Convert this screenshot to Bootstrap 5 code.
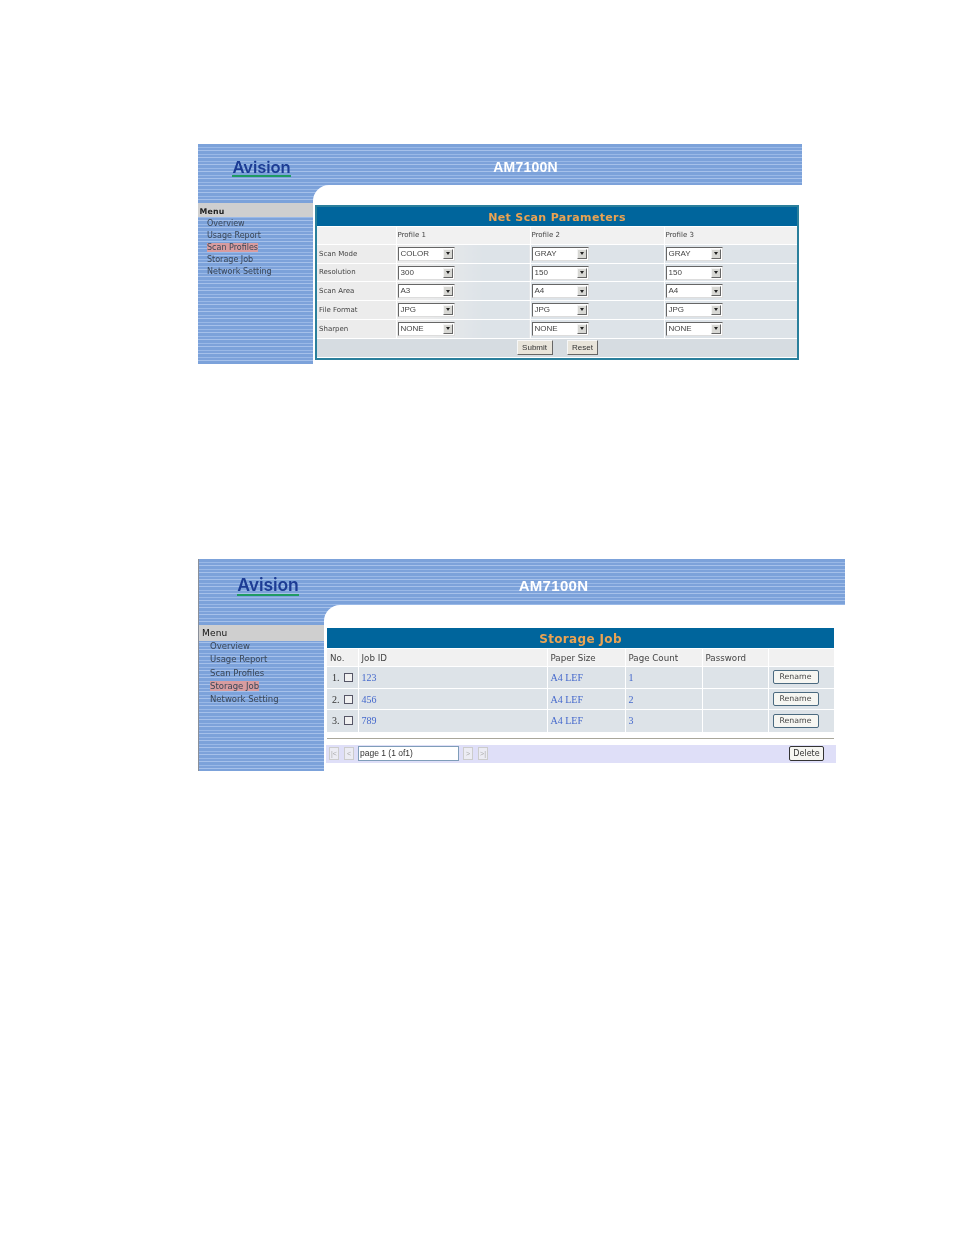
<!DOCTYPE html>
<html lang="en">
<head>
<meta charset="utf-8">
<title>Avision AM7100N</title>
<link href="https://cdn.jsdelivr.net/npm/bootstrap@5.3.0/dist/css/bootstrap.min.css" rel="stylesheet">
<style>
html,body{background:#fff;margin:0}
.sheet{width:954px;height:1235px;padding:144px 0 0 198px;overflow:hidden;font-family:"DejaVu Sans",sans-serif;color:#333}
.shot{display:grid;filter:blur(.35px);background-color:#82a6dc;background-image:repeating-linear-gradient(180deg,#7ca2da 0 3px,#9ab9e7 3px 4px,#7da2da 4px 6px,#a6c1ea 6px 7px)}
.shot-a{width:604px;height:220px;grid-template-columns:115px 1fr;grid-template-rows:41px 1fr}
.shot-b{width:647px;height:212px;margin-top:195px;grid-template-columns:125px 1fr;grid-template-rows:46px 1fr;border-left:1px solid #8a8f99}
.top{grid-column:1/3;display:flex;align-items:center;padding-top:6px}
.shot-b .top{padding-top:8px}
.logo-box{display:flex;justify-content:center}
.shot-a .logo-box{width:127px}
.shot-b .logo-box{width:138px}
.logo{font-family:Inter,"DejaVu Sans",sans-serif;font-weight:600;color:#1c3c94;font-size:16.6px;line-height:16px;border-bottom:2px solid #1f9a63;letter-spacing:-.1px}
.shot-b .logo{font-size:17.6px;line-height:18px}
.model{flex:1;text-align:center;font-family:"Liberation Sans",sans-serif;font-weight:700;font-size:14px;color:#fff;letter-spacing:.2px}
.shot-a .model{padding-right:76px}
.shot-b .model{padding-right:76px;font-size:15px;letter-spacing:.3px}
.side{padding-top:18px;font-size:8px;line-height:12px;color:#3a4656}
.shot-b .side{padding-top:20px;font-size:8.5px;line-height:13.3px}
.side-head{background:#cfcfcf;font-weight:700;font-size:7.8px;height:14px;line-height:17px;padding-left:1.5px;color:#222;letter-spacing:.2px;margin-bottom:1px}
.shot-b .side-head{height:16px;line-height:17px;font-size:9px;font-weight:400;color:#111;padding-left:3px;margin-bottom:-1px}
.side-item{padding-left:9px}
.shot-b .side-item{padding-left:11px}
.hot{background:#d89c9f}
.pane{background:#fff;border-top-left-radius:16px;padding:20px 3px 0 2px}
.shot-b .pane{padding:23px 10px 0 3px}
.box{border:2px solid #2a7f9c;height:155px;width:484px}
.bar{background:#00659c;color:#eba352;font-weight:700;text-align:center;letter-spacing:.35px}
.shot-a .bar{height:19px;line-height:21px;font-size:11px}
.shot-b .bar{height:20px;line-height:22px;font-size:12px;width:507px}
table.grid{border-collapse:collapse;table-layout:fixed;margin:0;font-size:7px;color:#444}
table.grid td{padding:0 0 0 2px;vertical-align:middle;border-left:1px solid #fff;border-top:1px solid #fff;background:#dde3e8}
table.grid td:first-child{border-left:0}
table.grid tr.head td{background:#f1f1f1}
.grid-a{width:480px}
.grid-a tr{height:18.7px}
.grid-a tr.head{height:18px}
table.grid-a td.lbl{background:#ececec}
table.grid-a td.p1{background:linear-gradient(90deg,#ebebeb 20%,#dde3e8 65%)}
table.grid-a td.slot{padding-left:1px}
.picker{display:flex;width:57px;height:14px;background:#fff;border:1px solid;border-color:#666 #ddd #ddd #666;font-family:"Liberation Sans",sans-serif;font-size:8px;line-height:12px;padding-left:2px;justify-content:space-between;color:#444}
.arrow{width:10px;height:10px;margin:1px;background:#d8d8d4;border:1px solid;border-color:#f4f4f4 #666 #666 #f4f4f4;display:flex;align-items:center;justify-content:center}
.arrow::after{content:"";border:2.5px solid transparent;border-top:3px solid #222;border-bottom:0}
.foot{height:19px;background:#d6dce1;display:flex;justify-content:center;align-items:center;gap:14px;padding-left:1px;border-top:1px solid #fff;width:480px}
.press{font-family:"Liberation Sans",sans-serif;font-size:8px;background:#e8e4da;color:#333;border:1px solid;border-color:#f7f7f7 #666 #666 #f7f7f7;height:15px;line-height:13px;padding:0 4.5px}
.grid-b{width:507px}
.grid-b tr{height:21.7px}
.grid-b tr.head{height:18px}
table.grid-b td{font-size:8.7px;padding-left:3px}
table.grid-b tr.head td{padding-top:2px}
.num{font-family:"Liberation Serif",serif;font-size:10px;color:#333;display:flex;justify-content:flex-end;align-items:center;gap:4px;padding-right:5px}
.tick{width:9px;height:9px;border:1px solid #556;background:#f1f1f1;display:inline-block}
table.grid-b td.linkish{font-family:"Liberation Serif",serif;font-size:10px;color:#4468cc}
.rename{font-family:"DejaVu Sans",sans-serif;font-size:7.8px;width:46px;height:14px;line-height:12px;background:#f6f6f2;border:1px solid #4b6a80;border-radius:2px;color:#444;text-align:center;display:block;margin-left:1px;padding:0}
.rule{height:1px;background:#a9a79b;width:507px;margin-top:6px}
.pager{width:510px;margin-left:-1px;height:18px;background:#dfdff8;margin-top:6px;display:flex;align-items:center;gap:5px;padding-left:3px}
.pg{width:10px;height:13px;background:#ececf4;border:1px solid #ccc;color:#aaa;font-size:7px;line-height:11px;text-align:center;font-family:"Liberation Sans",sans-serif}
.pagebox{width:101px;height:15px;background:#fff;border:1px solid #7f9db9;font-family:"Liberation Sans",sans-serif;font-size:8.5px;line-height:13px;padding-left:1px;color:#333;margin:0 -1px}
.del{margin-left:auto;margin-right:12px;font-size:8px;width:35px;height:15px;line-height:13px;border:1px solid #333;border-radius:2px;background:#f6f6f2;color:#333;text-align:center;font-family:"DejaVu Sans",sans-serif;padding:0}
</style>
</head>
<body>
<div class="sheet">
  <section class="shot shot-a">
    <div class="top"><div class="logo-box"><span class="logo">Avision</span></div><div class="model">AM7100N</div></div>
    <nav class="side">
      <div class="side-head">Menu</div>
      <div class="side-item">Overview</div>
      <div class="side-item">Usage Report</div>
      <div class="side-item"><span class="hot">Scan Profiles</span></div>
      <div class="side-item">Storage Job</div>
      <div class="side-item">Network Setting</div>
    </nav>
    <div class="pane">
      <div class="box">
        <div class="bar">Net Scan Parameters</div>
        <table class="grid grid-a">
          <colgroup><col style="width:79px"><col style="width:134px"><col style="width:134px"><col style="width:133px"></colgroup>
          <tr class="head"><td class="lbl"></td><td class="slot">Profile 1</td><td class="slot">Profile 2</td><td class="slot">Profile 3</td></tr>
          <tr><td class="lbl">Scan Mode</td><td class="p1 slot"><div class="picker">COLOR<i class="arrow"></i></div></td><td class="slot"><div class="picker">GRAY<i class="arrow"></i></div></td><td class="slot"><div class="picker">GRAY<i class="arrow"></i></div></td></tr>
          <tr><td class="lbl">Resolution</td><td class="p1 slot"><div class="picker">300<i class="arrow"></i></div></td><td class="slot"><div class="picker">150<i class="arrow"></i></div></td><td class="slot"><div class="picker">150<i class="arrow"></i></div></td></tr>
          <tr><td class="lbl">Scan Area</td><td class="p1 slot"><div class="picker">A3<i class="arrow"></i></div></td><td class="slot"><div class="picker">A4<i class="arrow"></i></div></td><td class="slot"><div class="picker">A4<i class="arrow"></i></div></td></tr>
          <tr><td class="lbl">File Format</td><td class="p1 slot"><div class="picker">JPG<i class="arrow"></i></div></td><td class="slot"><div class="picker">JPG<i class="arrow"></i></div></td><td class="slot"><div class="picker">JPG<i class="arrow"></i></div></td></tr>
          <tr><td class="lbl">Sharpen</td><td class="p1 slot"><div class="picker">NONE<i class="arrow"></i></div></td><td class="slot"><div class="picker">NONE<i class="arrow"></i></div></td><td class="slot"><div class="picker">NONE<i class="arrow"></i></div></td></tr>
        </table>
        <div class="foot"><span class="press">Submit</span><span class="press">Reset</span></div>
      </div>
    </div>
  </section>

  <section class="shot shot-b">
    <div class="top"><div class="logo-box"><span class="logo">Avision</span></div><div class="model">AM7100N</div></div>
    <nav class="side">
      <div class="side-head">Menu</div>
      <div class="side-item">Overview</div>
      <div class="side-item">Usage Report</div>
      <div class="side-item">Scan Profiles</div>
      <div class="side-item"><span class="hot">Storage Job</span></div>
      <div class="side-item">Network Setting</div>
    </nav>
    <div class="pane">
      <div class="bar">Storage Job</div>
      <table class="grid grid-b">
        <colgroup><col style="width:31px"><col style="width:189px"><col style="width:78px"><col style="width:77px"><col style="width:66px"><col style="width:66px"></colgroup>
        <tr class="head"><td>No.</td><td>Job ID</td><td>Paper Size</td><td>Page Count</td><td>Password</td><td></td></tr>
        <tr><td><span class="num">1.<i class="tick"></i></span></td><td class="linkish">123</td><td class="linkish">A4 LEF</td><td class="linkish">1</td><td></td><td><button type="button" class="rename">Rename</button></td></tr>
        <tr><td><span class="num">2.<i class="tick"></i></span></td><td class="linkish">456</td><td class="linkish">A4 LEF</td><td class="linkish">2</td><td></td><td><button type="button" class="rename">Rename</button></td></tr>
        <tr><td><span class="num">3.<i class="tick"></i></span></td><td class="linkish">789</td><td class="linkish">A4 LEF</td><td class="linkish">3</td><td></td><td><button type="button" class="rename">Rename</button></td></tr>
      </table>
      <div class="rule"></div>
      <div class="pager">
        <span class="pg">|&lt;</span><span class="pg">&lt;</span>
        <span class="pagebox">page 1 (1 of1)</span>
        <span class="pg">&gt;</span><span class="pg">&gt;|</span>
        <button type="button" class="del">Delete</button>
      </div>
    </div>
  </section>
</div>
<script src="https://cdn.jsdelivr.net/npm/bootstrap@5.3.0/dist/js/bootstrap.bundle.min.js"></script>
</body>
</html>
